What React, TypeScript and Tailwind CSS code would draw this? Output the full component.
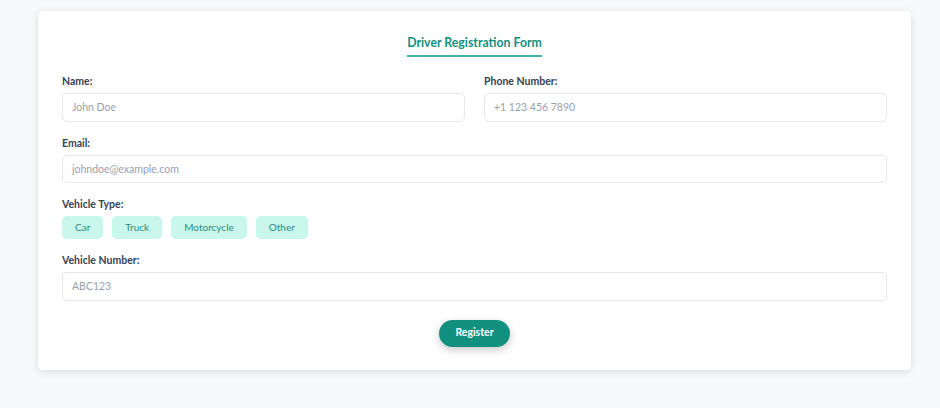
import React, { useState } from 'react';

const vehicleTypes = ['Car', 'Truck', 'Motorcycle', 'Other'];

const Field: React.FC<{ label: string; placeholder: string; className?: string }> = ({ label, placeholder, className }) => (
  <div className={className}>
    <label className="block text-[10.5px] font-bold text-gray-700 leading-[14px] mb-[5px]">{label}</label>
    <input
      placeholder={placeholder}
      className="w-full h-[28.5px] px-[9px] rounded-[5px] border border-gray-200 bg-white text-[10.5px] text-gray-700 placeholder:text-gray-400 outline-none"
    />
  </div>
);

export default function App() {
  const [vehicle, setVehicle] = useState<string | null>(null);

  return (
    <div className="h-[408px] bg-[#f8f9fb] pt-[11px] pl-[38px] pr-[29px]" style={{ fontFamily: 'Lato, sans-serif' }}>
      <div className="bg-white rounded-[5px] shadow-[0_2px_8px_rgba(0,0,0,0.12)] px-[24px] pt-[24px] pb-[23px]">
        <div className="flex justify-center">
          <h2 className="text-[12.3px] font-bold text-[#138f80] leading-[16px] pb-[4px] border-b-2 border-[#3fb3a4]">
            Driver Registration Form
          </h2>
        </div>

        <div className="mt-[17px] flex flex-col gap-[14px]">
          <div className="flex gap-[19px]">
            <Field label="Name:" placeholder="John Doe" className="flex-1" />
            <Field label="Phone Number:" placeholder="+1 123 456 7890" className="flex-1" />
          </div>

          <Field label="Email:" placeholder="johndoe@example.com" />

          <div>
            <label className="block text-[10.5px] font-bold text-gray-700 leading-[14px] mb-[5px]">Vehicle Type:</label>
            <div className="flex gap-[9px]">
              {vehicleTypes.map((v) => (
                <button
                  key={v}
                  onClick={() => setVehicle(v)}
                  className={
                    vehicle === v
                      ? 'h-[23px] px-[13px] rounded-[5px] bg-[#14917f] text-white text-[10px]'
                      : 'h-[23px] px-[13px] rounded-[5px] bg-[#c9f7ec] text-[#2c8c7e] text-[10px]'
                  }
                >
                  {v}
                </button>
              ))}
            </div>
          </div>

          <Field label="Vehicle Number:" placeholder="ABC123" />
        </div>

        <div className="flex justify-center mt-[19px]">
          <button className="w-[71px] h-[27px] rounded-full bg-[#12907f] text-white text-[10.5px] font-bold shadow-[0_3px_8px_rgba(0,0,0,0.22)]">
            Register
          </button>
        </div>
      </div>
    </div>
  );
}
